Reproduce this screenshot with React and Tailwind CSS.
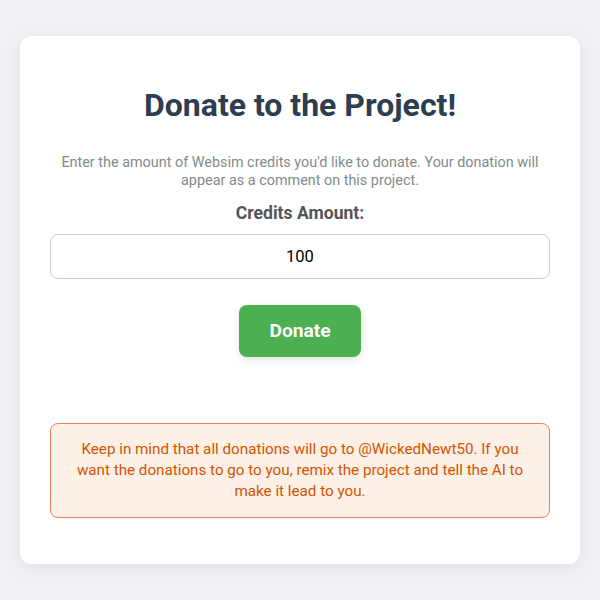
export default function App() {
  return (
    <div className="flex min-h-screen items-center justify-center bg-[#f0f2f5] px-5 font-['Roboto',sans-serif]">
      <div className="w-full max-w-[560px] rounded-xl bg-white px-[30px] pt-[30px] pb-[46px] text-center shadow-[0_4px_20px_rgba(0,0,0,0.08)]">
        <h1 className="mt-[21px] mb-[30px] text-[32px] leading-[37px] font-bold text-[#2c3e50]">
          Donate to the Project!
        </h1>
        <p className="text-[14.4px] leading-[18px] text-[#7f8c8d]">
          Enter the amount of Websim credits you'd like to donate. Your donation will appear as a
          comment on this project.
        </p>
        <label className="mt-[13px] block text-[17.6px] leading-[21px] font-bold text-[#555]">
          Credits Amount:
        </label>
        <input
          type="text"
          defaultValue="100"
          className="mt-[10px] block h-[45px] w-full rounded-lg border border-[#ccc] px-3 text-center text-[16.5px] text-black outline-none"
        />
        <button
          type="button"
          className="mt-[26px] h-[52px] rounded-lg bg-[#4caf50] px-[30px] text-[19.2px] font-bold text-white shadow-[0_4px_10px_rgba(0,0,0,0.1)]"
        >
          Donate
        </button>
        <div className="mt-[66px] rounded-lg border border-[#e8825a] bg-[#fdf0e6] px-[25px] py-[15px] text-[15.2px] leading-[21px] text-[#d35400]">
          Keep in mind that all donations will go to @WickedNewt50. If you want the donations to go
          to you, remix the project and tell the AI to make it lead to you.
        </div>
      </div>
    </div>
  );
}
